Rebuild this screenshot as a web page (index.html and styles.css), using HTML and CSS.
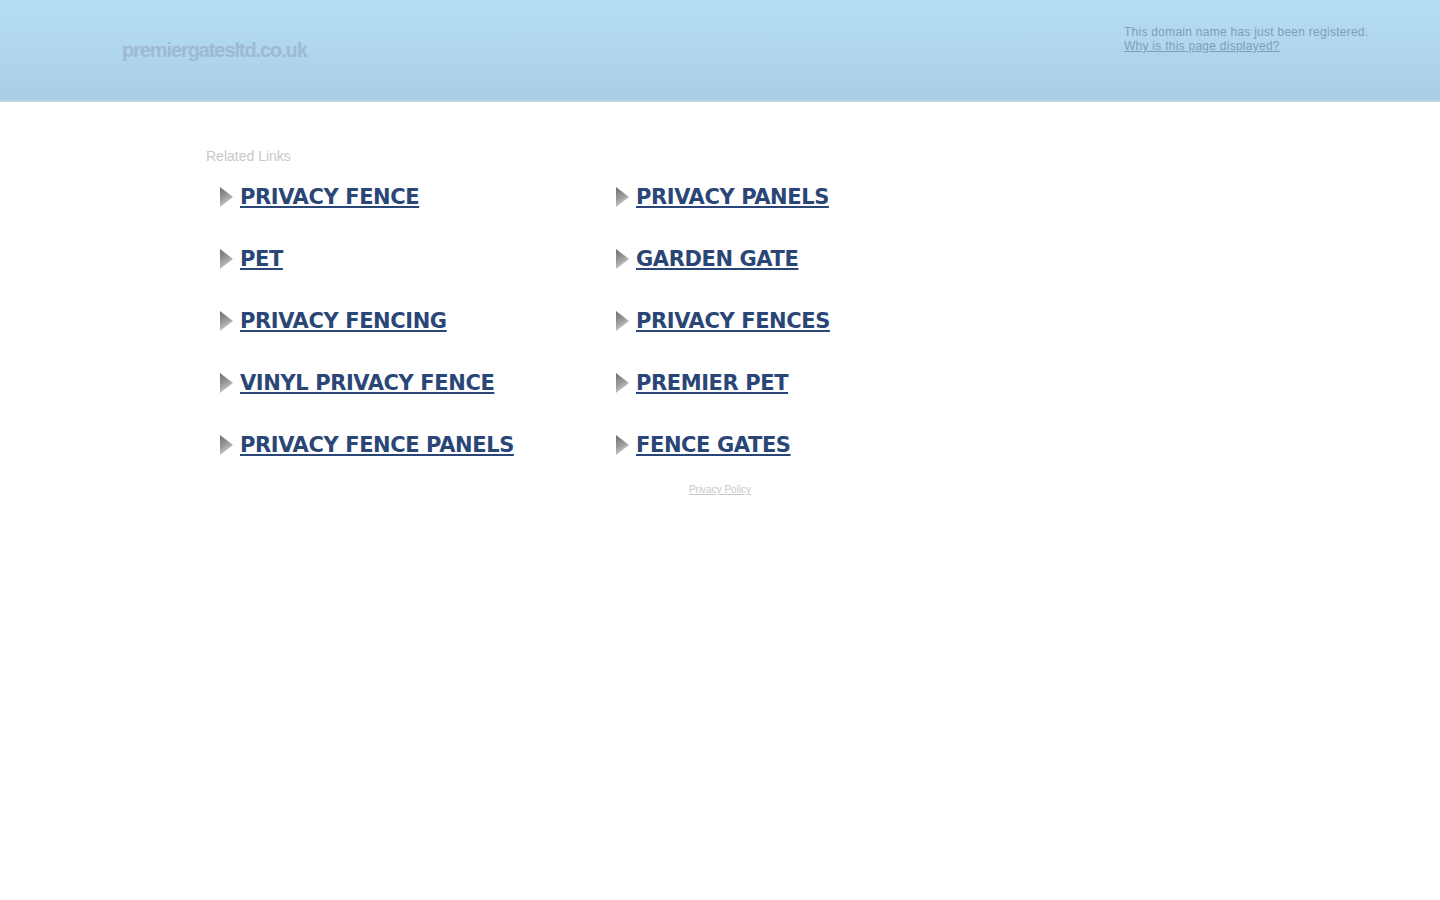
FILE: index.html
```html
<!DOCTYPE html>
<html>
<head>
<meta charset="utf-8">
<link rel="stylesheet" href="styles.css">
</head>
<body>
<svg class="defs" width="0" height="0" aria-hidden="true">
  <defs>
    <linearGradient id="arr" x1="0" y1="0" x2="0.4" y2="1">
      <stop offset="0" stop-color="#6e6e6e"/>
      <stop offset="0.55" stop-color="#9a9a9a"/>
      <stop offset="1" stop-color="#d0d0d0"/>
    </linearGradient>
  </defs>
</svg>
<div class="header">
  <div class="domain">premiergatesltd.co.uk</div>
  <div class="notice">
    <div>This domain name has just been registered.</div>
    <a href="#">Why is this page displayed?</a>
  </div>
</div>
<div class="main">
  <div class="related">Related Links</div>
  <div class="grid">
    <div class="item"><svg class="arrow" viewBox="0 0 14 20"><polygon points="0,0 13,10 0,20" fill="url(#arr)"/></svg><a href="#">PRIVACY FENCE</a></div>
    <div class="item"><svg class="arrow" viewBox="0 0 14 20"><polygon points="0,0 13,10 0,20" fill="url(#arr)"/></svg><a href="#">PRIVACY PANELS</a></div>
    <div class="item"><svg class="arrow" viewBox="0 0 14 20"><polygon points="0,0 13,10 0,20" fill="url(#arr)"/></svg><a href="#">PET</a></div>
    <div class="item"><svg class="arrow" viewBox="0 0 14 20"><polygon points="0,0 13,10 0,20" fill="url(#arr)"/></svg><a href="#">GARDEN GATE</a></div>
    <div class="item"><svg class="arrow" viewBox="0 0 14 20"><polygon points="0,0 13,10 0,20" fill="url(#arr)"/></svg><a href="#">PRIVACY FENCING</a></div>
    <div class="item"><svg class="arrow" viewBox="0 0 14 20"><polygon points="0,0 13,10 0,20" fill="url(#arr)"/></svg><a href="#">PRIVACY FENCES</a></div>
    <div class="item"><svg class="arrow" viewBox="0 0 14 20"><polygon points="0,0 13,10 0,20" fill="url(#arr)"/></svg><a href="#">VINYL PRIVACY FENCE</a></div>
    <div class="item"><svg class="arrow" viewBox="0 0 14 20"><polygon points="0,0 13,10 0,20" fill="url(#arr)"/></svg><a href="#">PREMIER PET</a></div>
    <div class="item"><svg class="arrow" viewBox="0 0 14 20"><polygon points="0,0 13,10 0,20" fill="url(#arr)"/></svg><a href="#">PRIVACY FENCE PANELS</a></div>
    <div class="item"><svg class="arrow" viewBox="0 0 14 20"><polygon points="0,0 13,10 0,20" fill="url(#arr)"/></svg><a href="#">FENCE GATES</a></div>
  </div>
  <div class="policy"><a href="#">Privacy Policy</a></div>
</div>
</body>
</html>
```
FILE: styles.css
```css
html, body {
  margin: 0;
  padding: 0;
  background: #fff;
  font-family: "Liberation Sans", Arial, sans-serif;
}
.defs {
  position: absolute;
  width: 0;
  height: 0;
}
.header {
  height: 100px;
  background: linear-gradient(to bottom, #b5ddf3 0%, #a9cfe8 100%);
  border-bottom: 2px solid #c3d5e3;
  display: flex;
  justify-content: space-between;
}
.domain {
  margin-left: 122px;
  margin-top: 38px;
  font-size: 20px;
  font-weight: bold;
  letter-spacing: -1.1px;
  color: #9fb9d2;
  line-height: 24px;
}
.notice {
  margin-right: 62px;
  margin-top: 25px;
  width: 254px;
  font-size: 12px;
  letter-spacing: 0.26px;
  line-height: 14px;
  color: #7f9dba;
}
.notice a {
  color: #7f9dba;
}
.main {
  width: 1028px;
  margin-left: 206px;
  padding-top: 46px;
}
.related {
  font-size: 14px;
  color: #c8c8c8;
  line-height: 16px;
}
.grid {
  display: grid;
  grid-template-columns: 396px 396px;
  padding-left: 14px;
  margin-top: 19px;
  row-gap: 34px;
}
.item {
  display: flex;
  align-items: center;
  height: 28px;
}
.arrow {
  width: 14px;
  height: 20px;
  margin-right: 6px;
  flex: none;
}
.item a {
  font-family: "DejaVu Sans", Verdana, sans-serif;
  font-weight: bold;
  font-size: 21px;
  letter-spacing: -0.4px;
  color: #2a4677;
  text-decoration: underline;
  line-height: 28px;
}
.policy {
  margin-left: -206px;
  margin-top: 25px;
  text-align: center;
  font-size: 10px;
  width: 1440px;
}
.policy a {
  color: #c8c8c8;
}
```
